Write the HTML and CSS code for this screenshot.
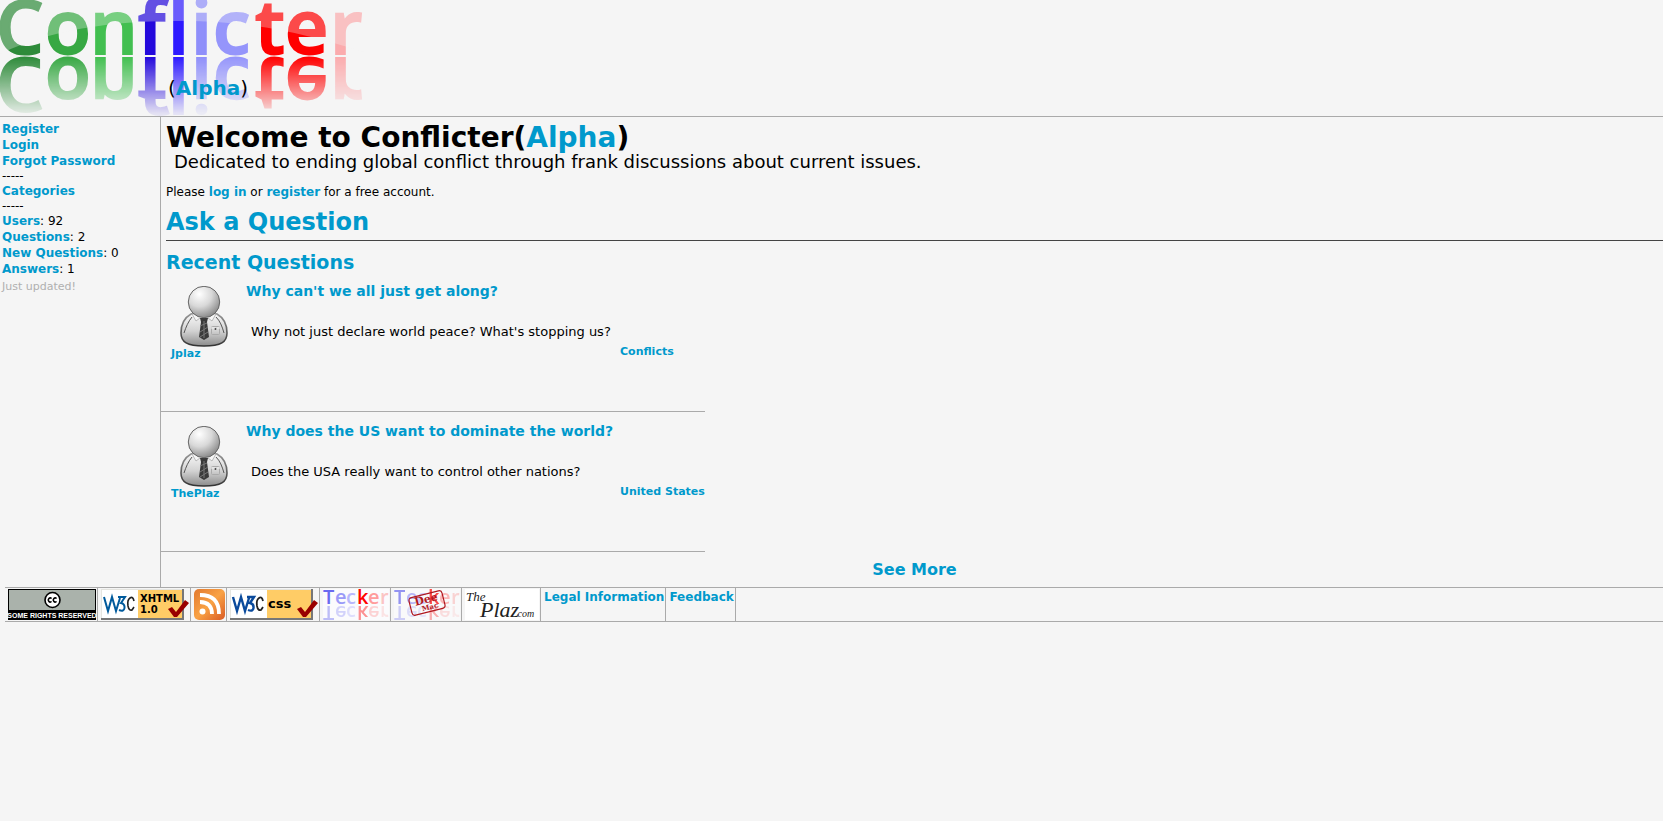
FILE: index.html
```html
<!DOCTYPE html>
<html lang="en">
<head>
<meta charset="utf-8">
<title>Conflicter (Alpha)</title>
<link rel="stylesheet" href="styles.css">
</head>
<body>
<svg width="0" height="0" class="defs" aria-hidden="true">
  <defs>
    <radialGradient id="head" cx="35%" cy="25%" r="80%"><stop offset="0" stop-color="#fff"/><stop offset=".5" stop-color="#d8d8d8"/><stop offset="1" stop-color="#858585"/></radialGradient>
    <linearGradient id="body" x1="0" y1="0" x2="0" y2="1"><stop offset="0" stop-color="#fafafa"/><stop offset=".55" stop-color="#d2d2d2"/><stop offset="1" stop-color="#8c8c8c"/></linearGradient>
    <linearGradient id="edge" x1="0" y1="0" x2="0" y2="1"><stop offset="0" stop-color="#999"/><stop offset="1" stop-color="#333"/></linearGradient>
    <symbol id="person" viewBox="0 0 48 61">
      <path d="M11 28C4 32 1 39 1 47c0 9 6 13 23 13s23-4 23-13c0-8-3-15-10-19-4-2-22-2-26 0z" fill="url(#body)" stroke="url(#edge)" stroke-width="1.6"/>
      <path d="M12 31C8 36 6 41 4 47M36 31c4 4 6 9 8 16" fill="none" stroke="#555" stroke-width="1"/>
      <path d="M12 28l4 7 4-3 4 3 4-3 4 3 4-7z" fill="#f6f6f6" stroke="#aaa" stroke-width=".8"/>
      <path d="M20 32h8l-1 4 2 15-5 3-5-3 2-15z" fill="#3a3a3a"/>
      <path d="M20 40l7-3M20 46l8-5M20 51l8-5M24 35v17" stroke="#777" stroke-width="1"/>
      <rect x="31.500" y="40.500" width="8" height="8" rx="1" fill="none" stroke="#aaa"/>
      <path d="M31 42h4l1 2 1-2h3" fill="none" stroke="#eee"/><circle cx="35.500" cy="43" r="1" fill="#444"/>
      <circle cx="24" cy="16" r="15.700" fill="url(#head)" stroke="#666" stroke-width="1"/>
    </symbol>
    <symbol id="tecker" viewBox="0 0 66 31">
      <rect width="66" height="31" fill="#fbfbfd"/>
      <g id="teckerword" font-family="Open Sans, sans-serif" font-size="20" font-weight="600">
        <text y="15" x="0 12 23 34 45 57"><tspan fill="#6a6af0">T</tspan><tspan fill="#9a9af8">e</tspan><tspan fill="#b8b8fc">c</tspan><tspan fill="#f00">k</tspan><tspan fill="#ff9c9c">e</tspan><tspan fill="#fbc4c4">r</tspan></text>
      </g>
      <use href="#teckerword" transform="matrix(1 0 0 -1 0 32)" opacity=".42"/>
    </symbol>
  </defs>
</svg>

<header class="banner">
  <svg class="logo" width="364" height="116" viewBox="0 0 364 116" role="img" aria-label="Conflicter">
    <defs>
      <linearGradient id="fade" gradientUnits="userSpaceOnUse" x1="0" y1="57" x2="0" y2="114"><stop offset="0" stop-color="#fff"/><stop offset="1" stop-color="#fff" stop-opacity=".08"/></linearGradient>
      <mask id="fademask" maskUnits="userSpaceOnUse" x="0" y="56" width="364" height="60"><rect y="56" width="364" height="60" fill="url(#fade)"/></mask>
      <g id="wordmark" class="wordmark">
        <text y="54" x="-4 45 90 138 168 191 213 255 285 330"><tspan fill="#2e8b3a" stroke="#2e8b3a">C</tspan><tspan fill="#37a843" stroke="#37a843">o</tspan><tspan fill="#42bf50" stroke="#42bf50">n</tspan><tspan fill="#2409dc" stroke="#2409dc">f</tspan><tspan fill="#2e1aff" stroke="#2e1aff">l</tspan><tspan fill="#8f8ffa" stroke="#8f8ffa">i</tspan><tspan fill="#9595fb" stroke="#9595fb">c</tspan><tspan fill="#f00" stroke="#f00">t</tspan><tspan fill="#f00" stroke="#f00">e</tspan><tspan fill="#fbabad" stroke="#fbabad">r</tspan></text>
      </g>
    </defs>
    <use href="#wordmark"/>
    <path d="M0 0V54C60 25 130 21 180 21C250 21 300 32 364 52V0z" fill="#f5f5f5" opacity=".3"/>
    <g mask="url(#fademask)"><use href="#wordmark" transform="matrix(1 0 0 -1 0 112)"/></g>
  </svg>
  <div class="stage">(<a href="#">Alpha</a>)</div>
</header>

<div class="columns">
  <nav class="side">
    <a href="#">Register</a>
    <a href="#">Login</a>
    <a href="#">Forgot Password</a>
    <span class="rule">-----</span>
    <a href="#">Categories</a>
    <span class="rule">-----</span>
    <span><a href="#">Users</a>: 92</span>
    <span><a href="#">Questions</a>: 2</span>
    <span><a href="#">New Questions</a>: 0</span>
    <span><a href="#">Answers</a>: 1</span>
    <small>Just updated!</small>
  </nav>

  <main class="content">
    <h1>Welcome to Conflicter(<a href="#">Alpha</a>)</h1>
    <p class="tagline">Dedicated to ending global conflict through frank discussions about current issues.</p>
    <p class="signin">Please <a href="#">log in</a> or <a href="#">register</a> for a free account.</p>
    <h2 class="ask"><a href="#">Ask a Question</a></h2>
    <h3 class="recent"><a href="#">Recent Questions</a></h3>
    <div class="list">
      <article class="question">
        <div class="author"><svg width="48" height="61"><use href="#person"/></svg><a href="#">Jplaz</a></div>
        <div class="text"><h4><a href="#">Why can't we all just get along?</a></h4><p>Why not just declare world peace? What's stopping us?</p></div>
        <a class="category" href="#">Conflicts</a>
      </article>
      <article class="question">
        <div class="author"><svg width="48" height="61"><use href="#person"/></svg><a href="#">ThePlaz</a></div>
        <div class="text"><h4><a href="#">Why does the US want to dominate the world?</a></h4><p>Does the USA really want to control other nations?</p></div>
        <a class="category" href="#">United States</a>
      </article>
    </div>
    <p class="more"><a href="#">See More</a></p>
  </main>
</div>

<footer class="foot">
  <a href="#" aria-label="Some rights reserved">
    <svg width="88" height="31" viewBox="0 0 88 31">
      <rect width="88" height="31" fill="#000"/><rect x="1" y="1" width="86" height="20" fill="#aab2ab"/>
      <circle cx="44.500" cy="11" r="7.500" fill="#fff" stroke="#000" stroke-width="1.600"/>
      <path d="M43.600 9.500a2 2 0 1 0 0 3M48.600 9.500a2 2 0 1 0 0 3" fill="none" stroke="#000" stroke-width="1.500"/>
      <text x="44" y="29" text-anchor="middle" class="badge-cc">SOME RIGHTS RESERVED</text>
    </svg></a>
  <a href="#" aria-label="W3C XHTML 1.0">
    <svg width="88" height="31" viewBox="0 0 88 31">
      <rect width="83" height="31" fill="#777"/><rect width="81" height="29" fill="#e5e5e0"/><rect x="1" y="1" width="36" height="28" fill="#fff"/><rect x="37" y="1" width="44" height="28" fill="#fc6"/>
      <path d="M3 8l4 14 4-14 4 14 4-13M17 8h7l-4 6q4 1 3.500 5t-5.500 2" fill="none" stroke="#005a9c" stroke-width="2"/><path d="M33 12q-1-5-4-3-3 2-2 8 1 5 4 4l2-3" fill="none" stroke="#222" stroke-width="1.600"/>
      <text x="39" y="13" class="badge-x">XHTML</text><text x="39" y="24" class="badge-x">1.0</text>
      <path d="M67 20l4-2 4 5 9-12 4 3-12 14-3 0z" fill="#900"/>
    </svg></a>
  <a href="#" aria-label="RSS feed">
    <svg width="31" height="31" viewBox="0 0 31 31">
      <defs><linearGradient id="rss" x1="0" y1="0" x2="1" y2="1"><stop offset="0" stop-color="#e2792f"/><stop offset=".5" stop-color="#f9a245"/><stop offset="1" stop-color="#d95a24"/></linearGradient></defs>
      <rect width="31" height="31" rx="5" fill="url(#rss)"/><circle cx="8.500" cy="22.500" r="3" fill="#fff"/>
      <path d="M6 13q12 0 12 12M6 6q19 0 19 19" fill="none" stroke="#fff" stroke-width="3.800"/>
    </svg></a>
  <a href="#" aria-label="W3C CSS">
    <svg width="88" height="31" viewBox="0 0 88 31">
      <rect width="83" height="31" fill="#777"/><rect width="81" height="29" fill="#e5e5e0"/><rect x="1" y="1" width="36" height="28" fill="#fff"/><rect x="37" y="1" width="44" height="28" fill="#fc6"/>
      <path d="M3 8l4 14 4-14 4 14 4-13M17 8h7l-4 6q4 1 3.500 5t-5.500 2" fill="none" stroke="#0a4a9c" stroke-width="2.400"/><path d="M33 12q-1-5-4-3-3 2-2 8 1 5 4 4l2-3" fill="none" stroke="#222" stroke-width="1.800"/>
      <text x="38" y="19" class="badge-css">css</text>
      <path d="M67 20l4-2 4 5 9-12 4 3-12 14-3 0z" fill="#900"/>
    </svg></a>
  <a href="#" aria-label="Tecker"><svg width="66" height="31"><use href="#tecker"/></svg></a>
  <a href="#" aria-label="Tecker Dee Mac">
    <svg width="66" height="31" viewBox="0 0 66 31"><use href="#tecker" opacity=".7"/>
      <g transform="rotate(-14 33 14)" fill="#b0181f"><rect x="16" y="5" width="34" height="18" rx="3" fill="none" stroke="#b0181f" stroke-width="1.200"/><text x="33" y="14" text-anchor="middle" class="stamp">Dee</text><text x="35" y="21" text-anchor="middle" class="stamp-small">Mac</text></g>
    </svg></a>
  <a href="#" aria-label="ThePlaz.com">
    <svg width="74" height="31" viewBox="0 0 74 31"><rect width="74" height="31" fill="#fff"/>
      <g class="script"><text x="1" y="12" font-size="13">The</text><text x="15" y="28" font-size="22">Plaz</text><text x="50" y="28" font-size="10">.com</text></g>
    </svg></a>
  <a href="#">Legal Information</a>
  <a href="#">Feedback</a>
</footer>
</body>
</html>
```

FILE: styles.css
```css
body {
  margin: 0;
  background: #f5f5f5;
  color: #000;
  font-family: Verdana, "DejaVu Sans", sans-serif;
  font-size: 12px;
  line-height: 16px;
}

a { color: #0099cc; font-weight: bold; text-decoration: none; }
h1, h2, h3, h4, p { margin: 0; }
svg { display: block; }
.defs { position: absolute; }

.banner { position: relative; border-bottom: 1px solid #aaa; }
.wordmark { font-family: "Open Sans", "Noto Sans", sans-serif; font-size: 75px; font-weight: 600; stroke-width: 2px; }
.stage { position: absolute; left: 168px; top: 76px; font-size: 20px; line-height: 24px; }

.columns { display: flex; }
.side {
  display: flex;
  flex-direction: column;
  box-sizing: border-box;
  flex: 0 0 161px;
  padding: 4px 2px;
  border-right: 1px solid #aaa;
}
.side .rule { line-height: 14px; }
.side small { margin-top: 2px; color: #b0b0b0; font-size: 11px; }

.content { flex: 1; min-width: 0; padding-left: 5px; }
h1 { padding-top: 5px; font-size: 28px; line-height: 32px; }
.tagline { padding-left: 8px; font-size: 18px; line-height: 16px; }
.signin { padding-top: 14px; }
.ask { padding: 8px 0 4px; border-bottom: 1px solid #444; font-size: 24px; line-height: 28px; }
.recent { padding-top: 9px; font-size: 19px; line-height: 24px; }

.list { display: inline-block; margin-left: -5px; vertical-align: top; }
.question {
  display: grid;
  grid-template-columns: 85px 374px auto;
  box-sizing: border-box;
  min-height: 140px;
  padding-top: 11px;
  border-bottom: 1px solid #aaa;
}
.list .question:first-child { min-height: 138px; padding-top: 9px; }
.author { padding: 3px 0 0 10px; font-size: 11px; line-height: 14px; }
.author svg { margin-left: 9px; }
.text h4 { font-size: 14px; line-height: 16px; }
.text p { padding: 25px 0 0 5px; font-size: 13px; }
.category { padding-top: 61px; font-size: 11px; white-space: nowrap; }
.more { padding: 10px 0 9px; text-align: center; font-size: 16px; }

.foot {
  display: flex;
  margin-left: 5px;
  border-top: 1px solid #aaa;
  border-bottom: 1px solid #aaa;
}
.foot a { padding: 1px 1px 1px 3px; border-right: 1px solid #aaa; }

.badge-cc { font: bold 7px "Liberation Sans", sans-serif; fill: #fff; }
.badge-x { font: bold 10px "DejaVu Sans", sans-serif; }
.badge-css { font: bold 13px "DejaVu Sans", sans-serif; }
.stamp { font: bold 11px "DejaVu Serif", serif; }
.stamp-small { font: bold 7px "DejaVu Serif", serif; }
.script { font-family: "Liberation Serif", serif; font-style: italic; font-weight: normal; fill: #222; }
```
